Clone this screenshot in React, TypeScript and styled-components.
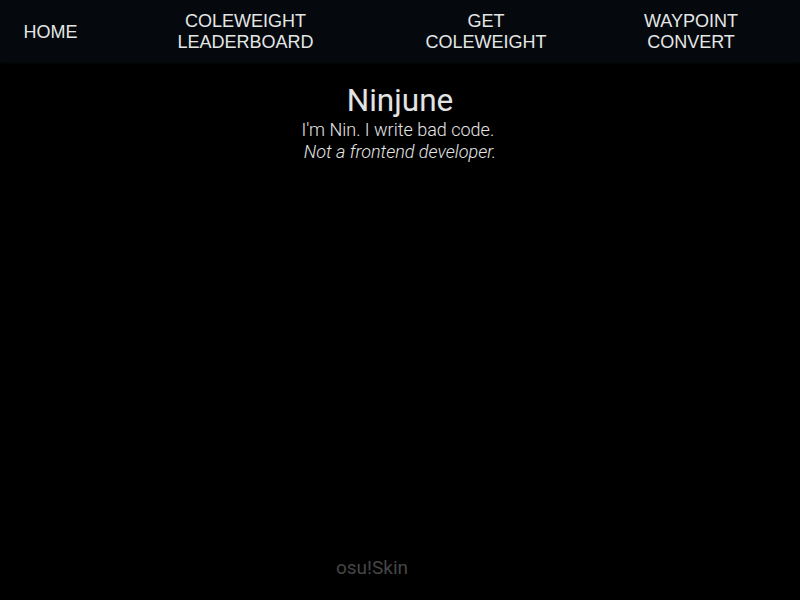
import * as React from "react";
import styled, { createGlobalStyle } from "styled-components";

const GlobalStyle = createGlobalStyle`
  html, body {
    margin: 0;
    padding: 0;
    background: #000;
  }
  body {
    font-family: "Liberation Sans", Arial, sans-serif;
  }
`;

const Page = styled.div`
  display: flex;
  flex-direction: column;
  height: 600px;
  background: #000;
`;

const NavBar = styled.nav`
  display: flex;
  align-items: center;
  height: 62px;
  padding-top: 2px;
  box-sizing: border-box;
  background: #05090d;
  box-shadow: 0 1px 3px rgba(5, 9, 13, 0.9);
`;

const NavItem = styled.a<{ $width: number }>`
  width: ${(p) => p.$width}px;
  flex: none;
  text-align: center;
  color: #e4e6e6;
  font-family: "Liberation Sans", Arial, sans-serif;
  font-size: 18px;
  line-height: 21px;
  text-decoration: none;
  cursor: pointer;
`;

const Hero = styled.header`
  display: flex;
  flex-direction: column;
  align-items: center;
  padding-top: 21px;
  font-family: Roboto, "Noto Sans", sans-serif;
  color: #e0e0e0;
`;

const Title = styled.h1`
  margin: 0;
  font-size: 31.5px;
  font-weight: 400;
  line-height: 36px;
  color: #e2e4e4;
`;

const Line = styled.p<{ $italic?: boolean }>`
  margin: 0;
  font-size: 18px;
  font-weight: 300;
  line-height: 22px;
  font-style: ${(p) => (p.$italic ? "italic" : "normal")};
  color: #e6e6e6;
`;

const Spacer = styled.div`
  flex: 1;
`;

const Footer = styled.footer`
  display: flex;
  justify-content: center;
  padding: 0 56px 21px 0;
  font-family: Roboto, "Noto Sans", sans-serif;
  font-size: 19px;
  line-height: 22px;
  color: #464646;
`;

const links = [
  { label: ["HOME"], width: 101 },
  { label: ["COLEWEIGHT", "LEADERBOARD"], width: 289 },
  { label: ["GET", "COLEWEIGHT"], width: 192 },
  { label: ["WAYPOINT", "CONVERT"], width: 218 },
];

export default function App() {
  return (
    <>
      <GlobalStyle />
      <Page>
        <NavBar>
          {links.map((l) => (
            <NavItem key={l.label.join(" ")} $width={l.width}>
              {l.label.map((part, i) => (
                <React.Fragment key={part}>
                  {i > 0 && <br />}
                  {part}
                </React.Fragment>
              ))}
            </NavItem>
          ))}
        </NavBar>
        <Hero>
          <Title>Ninjune</Title>
          <Line>I'm Nin. I write bad code.&nbsp;</Line>
          <Line $italic>Not a frontend developer.</Line>
        </Hero>
        <Spacer />
        <Footer>osu!Skin</Footer>
      </Page>
    </>
  );
}
